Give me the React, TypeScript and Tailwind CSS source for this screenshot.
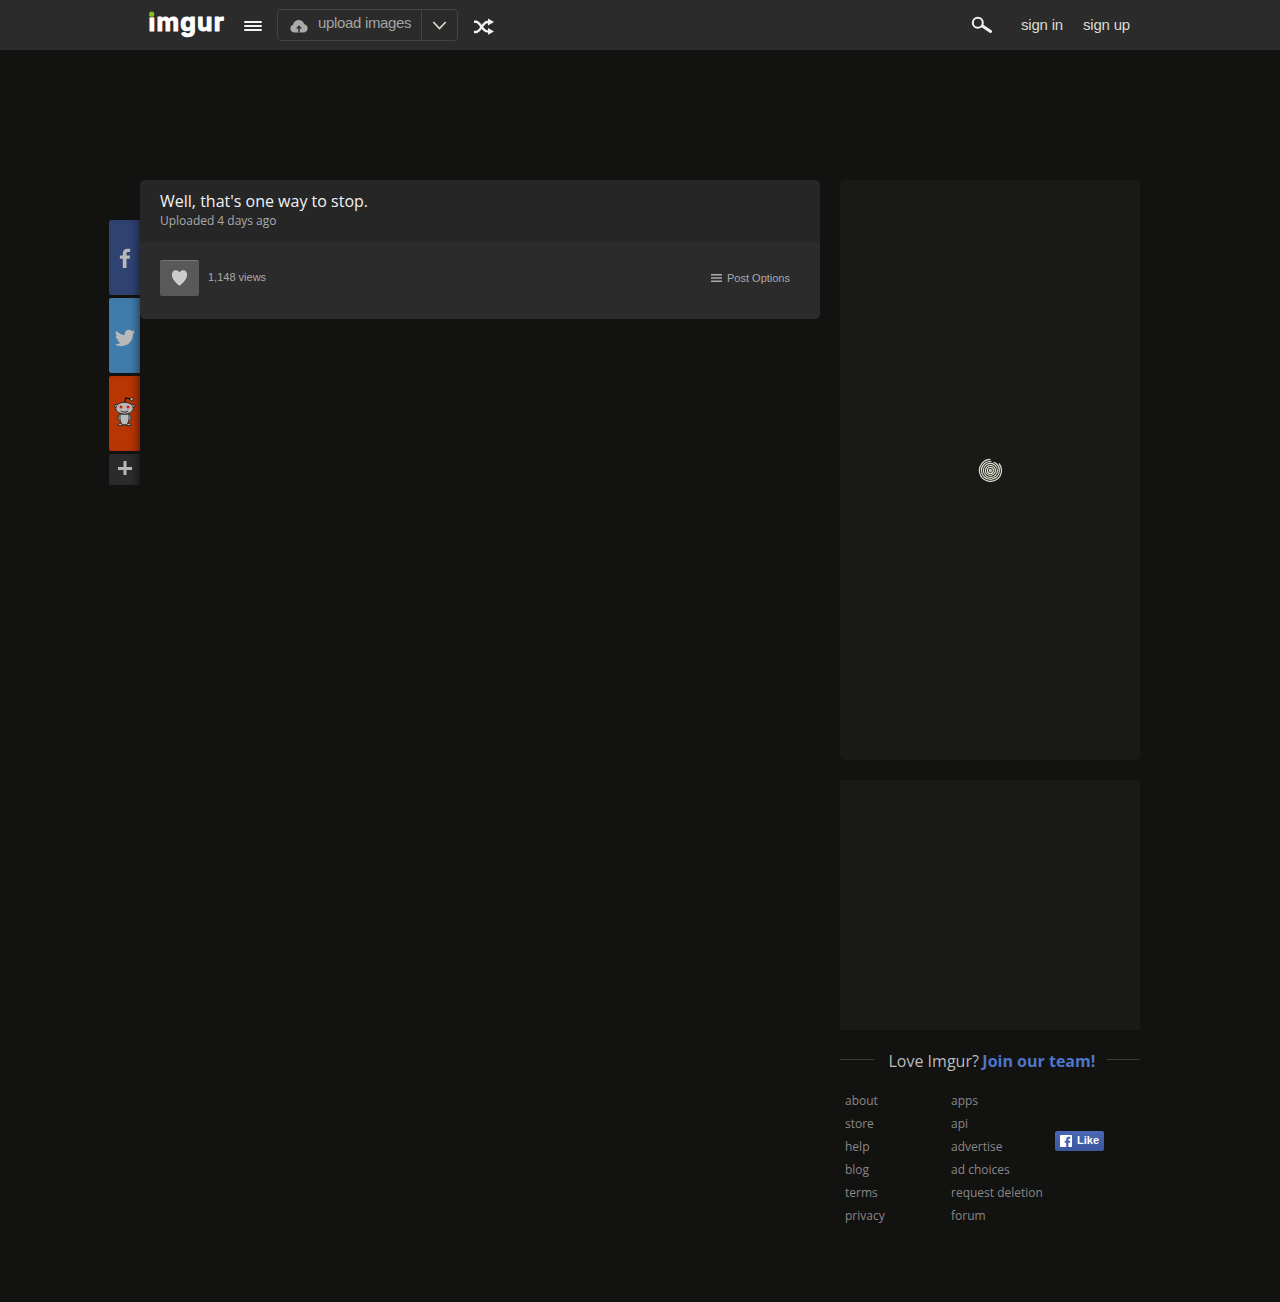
import { ReactNode } from "react";

const footerLinks = [
  ["about", "store", "help", "blog", "terms", "privacy"],
  ["apps", "api", "advertise", "ad choices", "request deletion", "forum"],
];

const rings = [1, 3, 5, 7, 9];

function Logo() {
  return (
    <svg width="80" height="40" viewBox="0 0 80 40" className="block">
      <text
        x="0.6"
        y="26.3"
        textLength="75.2"
        lengthAdjust="spacing"
        fontSize="24.8"
        fontWeight="700"
        fill="#fff"
        stroke="#fff"
        strokeWidth="1"
        strokeLinejoin="round"
        className="font-['Inter',sans-serif]"
      >
        imgur
      </text>
      <rect x="0" y="0" width="8" height="12.3" fill="#2b2b2b" />
      <circle cx="3.7" cy="9.2" r="2.6" fill="#85bf25" />
    </svg>
  );
}

function Header() {
  return (
    <header className="h-[50px] bg-[#2b2b2b] font-['Liberation_Sans',sans-serif] text-[15px]">
      <div className="mx-auto flex h-full w-[1000px] items-start">
        <div className="ml-2 mt-[5px] w-24">
          <Logo />
        </div>
        <div className="mt-[21px] flex w-[18px] flex-col gap-[2px]">
          <span className="h-[2px] rounded-sm bg-[#f2f2f2]" />
          <span className="h-[2px] rounded-sm bg-[#f2f2f2]" />
          <span className="h-[2px] rounded-sm bg-[#f2f2f2]" />
        </div>
        <div className="ml-[15px] mt-[9px] flex h-8 w-[181px] rounded-[4px] border border-[#444]">
          <div className="flex w-[144px] border-r border-[#444]">
            <svg
              width="18"
              height="13"
              viewBox="0 0 18 13"
              className="ml-3 mt-[10px]"
            >
              <path
                d="M3.8 12.4a4 4 0 0 1-.8-7.7C3.8 1.6 6.1.1 8.7.1c2.8 0 5 1.7 5.4 4.2a4.1 4.1 0 0 1 .1 8.1z"
                fill="#aaa"
              />
              <path d="M9 5.2 6 8.5h2.3v3.9h1.4V8.5H12z" fill="#2b2b2b" />
            </svg>
            <span className="ml-[10px] mt-[3px] whitespace-nowrap leading-5 tracking-[-0.33px] text-[#a4a4a4]">
              upload images
            </span>
          </div>
          <svg
            width="15"
            height="10"
            viewBox="0 0 15 10"
            className="ml-[10px] mt-[11px]"
          >
            <path
              d="m1.3 1 6.2 6.6L13.7 1"
              fill="none"
              stroke="#ddddd1"
              strokeWidth="1.6"
            />
          </svg>
        </div>
        <svg
          width="21"
          height="17"
          viewBox="0 0 21 17"
          className="ml-[15px] mt-[18px]"
        >
          <g fill="none" stroke="#f2f2f2" strokeWidth="2.4">
            <path d="M1 3.8h2.2C7 3.8 9.6 13.4 14.3 13.4H16" />
            <path d="M1 14h2.2C7.6 14 9.6 4 14.3 4H16" />
          </g>
          <path d="M15 .6 21 4l-6 3.4zM15 10l6 3.4-6 3.4z" fill="#f2f2f2" />
        </svg>
        <div className="mr-[10px] ml-auto flex tracking-[-0.2px] text-[#ddddd1]">
          <svg
            width="22"
            height="18"
            viewBox="0 0 22 18"
            className="mt-4 mr-7"
          >
            <circle
              cx="6.8"
              cy="6.8"
              r="5"
              fill="none"
              stroke="#f2f2f2"
              strokeWidth="2"
            />
            <path
              d="m11.4 9.9 8.2 5.6"
              stroke="#f2f2f2"
              strokeWidth="3"
              strokeLinecap="round"
            />
          </svg>
          <a className="mt-[15px] mr-5 leading-5">sign in</a>
          <a className="mt-[15px] leading-5">sign up</a>
        </div>
      </div>
    </header>
  );
}

function ShareButton({
  className,
  children,
}: {
  className: string;
  children: ReactNode;
}) {
  return (
    <div
      className={`flex justify-center rounded-l-[2px] shadow-[inset_-8px_0_8px_-6px_rgba(0,0,0,0.5)] ${className}`}
    >
      {children}
    </div>
  );
}

function ShareBar() {
  return (
    <div className="mt-10 flex w-[31px] flex-col gap-[3px]">
      <ShareButton className="h-[75px] bg-[#2f4372]">
        <svg width="12" height="20" viewBox="0 0 12 20" className="mt-7">
          <path
            d="M3.8 20v-9.3H.9V7.5h2.9V5.4C3.8 2.4 5.6.7 8.3.7h2.8v3.2H9.2c-1.3 0-1.7.6-1.7 1.7v1.9H11l-.4 3.2H7.5V20z"
            fill="#b9b9b9"
          />
        </svg>
      </ShareButton>
      <ShareButton className="h-[75px] bg-[#407cab]">
        <svg width="20" height="20" viewBox="0 0 24 24" className="mt-[30px]">
          <path
            d="M23.95 4.57a10 10 0 0 1-2.82.77 4.96 4.96 0 0 0 2.16-2.72c-.95.55-2 .95-3.13 1.18a4.92 4.92 0 0 0-8.38 4.48C7.69 8.09 4.07 6.13 1.64 3.16a4.93 4.93 0 0 0 1.52 6.57 4.9 4.9 0 0 1-2.23-.61v.06a4.92 4.92 0 0 0 3.95 4.83 5 5 0 0 1-2.21.08 4.94 4.94 0 0 0 4.6 3.42A9.87 9.87 0 0 1 0 19.54a14 14 0 0 0 7.55 2.21c9.05 0 14-7.5 14-13.98 0-.21 0-.42-.02-.63a9.94 9.94 0 0 0 2.42-2.57z"
            fill="#b9b9b9"
          />
        </svg>
      </ShareButton>
      <ShareButton className="h-[75px] bg-[#b93504]">
        <svg width="21" height="30" viewBox="1 0 21 30" className="mt-[21px]">
          <path
            d="M11.6 6.5 12.7 1l5 1.1"
            fill="none"
            stroke="#111"
            strokeWidth="1.1"
          />
          <g fill="#b9b9b9" stroke="#222" strokeWidth="0.9">
            <circle cx="18.6" cy="2.1" r="1.6" />
            <circle cx="3.2" cy="9" r="1.7" />
            <circle cx="19.8" cy="9" r="1.7" />
            <ellipse cx="7.2" cy="20.7" rx="2.2" ry="3.4" />
            <ellipse cx="15.8" cy="20.7" rx="2.2" ry="3.4" />
            <path d="M4.9 28.6c.2-2.8 4.8-2.8 4.8 0zM13.3 28.6c0-2.8 4.6-2.8 4.8 0z" />
            <path d="M7.2 17h8.6c.7 4.6 0 9.4-2.6 10.8H9.8C7.2 26.4 6.5 21.6 7.2 17z" />
            <ellipse cx="11.5" cy="11.2" rx="8.7" ry="5.9" />
          </g>
          <circle cx="8" cy="10.1" r="1.5" fill="#c9210c" />
          <circle cx="15" cy="10.1" r="1.5" fill="#c9210c" />
          <path
            d="M7.8 14c2 1.4 5.4 1.4 7.4 0"
            fill="none"
            stroke="#111"
            strokeWidth="0.9"
          />
        </svg>
      </ShareButton>
      <ShareButton className="h-[31px] bg-[#2b2b2b]">
        <svg width="14" height="14" viewBox="0 0 14 14" className="mt-[7px]">
          <path
            d="M7 0v14M0 7.5h14"
            fill="none"
            stroke="#b9b9b9"
            strokeWidth="3"
          />
        </svg>
      </ShareButton>
    </div>
  );
}

function Post() {
  return (
    <div className="h-[139px] w-[680px] overflow-hidden rounded-[5px] bg-[#2b2b2b]">
      <div className="h-[60px] bg-[#262626] px-5 pt-[10px] shadow-[0_0_3px_rgba(0,0,0,0.35)]">
        <h1 className="text-base leading-[22px] text-[#f2f2f2]">
          Well, that's one way to stop.
        </h1>
        <p className="mt-px text-xs leading-4 tracking-[-0.02px] text-[#aaa]">
          Uploaded 4 days ago
        </p>
      </div>
      <div className="flex pt-5 pr-[30px] pl-5 font-['Liberation_Sans',sans-serif] text-[11px] text-[#aaa]">
        <div className="flex h-9 w-[39px] justify-center rounded-[2px] border-t border-[#777] bg-[#595959]">
          <svg width="17" height="17" viewBox="0 0 17 17" className="mt-2">
            <path
              d="M8.5 16.8C5 14 .9 10.2.9 5.8c0-2.8 1.6-4.6 3.8-4.6 1.7 0 3 .8 3.8 2.3.8-1.5 2.1-2.3 3.8-2.3 2.2 0 3.8 1.8 3.8 4.6 0 4.4-4.1 8.2-7.6 11z"
              fill="#ccc"
            />
          </svg>
        </div>
        <span className="mt-[9px] ml-[9px] leading-4">1,148 views</span>
        <svg
          width="11"
          height="8"
          viewBox="0 0 11 8"
          className="mt-[14px] mr-[5px] ml-auto"
        >
          <path
            d="M0 .8h11M0 4h11M0 7.2h11"
            stroke="#aaa"
            strokeWidth="1.5"
          />
        </svg>
        <span className="mt-[10px] leading-4">Post Options</span>
      </div>
    </div>
  );
}

function Spinner() {
  return (
    <svg width="24" height="24" viewBox="0 0 24 24">
      <g fill="none" stroke="#ddddd1" strokeWidth="1.2">
        {rings.map((r) => (
          <circle key={r} cx="12.4" cy="12.4" r={r} />
        ))}
        <path d="M12.4 1.4A11 11 0 1 0 21 5.5" />
      </g>
      <path d="M12.9 0 13.3 3.8l2 .8 1.6-1.5 3 2L22 0z" fill="#191917" />
    </svg>
  );
}

function Sidebar() {
  return (
    <div className="ml-5 w-[300px]">
      <div className="flex h-[580px] items-center justify-center rounded-[5px] bg-[#191917]">
        <Spinner />
      </div>
      <div className="mt-5 h-[250px] bg-[#191917]" />
      <div className="mt-5 flex h-[22px] items-start text-base leading-[22px] whitespace-nowrap">
        <span className="mt-[9px] h-px w-[34px] bg-[#3a3a39]" />
        <span className="ml-[14.5px] text-[#bbb]">Love Imgur?</span>
        <a className="ml-[3.5px] font-bold text-[#4e76c9]">Join our team!</a>
        <span className="mt-[9px] ml-auto h-px w-[33px] bg-[#3a3a39]" />
      </div>
      <div className="mt-[17px] flex pl-[5px] text-xs leading-[23px] text-[#888]">
        {footerLinks.map((column) => (
          <ul key={column[0]} className="w-[106px]">
            {column.map((link) => (
              <li key={link}>{link}</li>
            ))}
          </ul>
        ))}
        <div className="mt-[42px] -ml-[2px] flex h-5 w-[49px] items-center rounded-[2px] bg-linear-to-b from-[#4a68b4] to-[#3b57a0] pl-[5px] font-['Liberation_Sans',sans-serif] text-[11px] font-bold text-white">
          <svg width="12" height="12" viewBox="0 0 12 12">
            <rect width="12" height="12" rx="0.8" fill="#fff" />
            <path
              d="M6.2 12V7.7H4.7V5.7h1.5V4.4c0-1.7 1-2.6 2.5-2.6h1.6v1.9h-.9c-.8 0-1 .4-1 1v1h1.9l-.2 2H8.4V12z"
              fill="#4361aa"
            />
          </svg>
          <span className="-mt-[2px] ml-[5px] leading-5">Like</span>
        </div>
      </div>
    </div>
  );
}

function App() {
  return (
    <div className="h-[1302px] bg-[#121211] font-['Open_Sans',sans-serif]">
      <Header />
      <div className="mx-auto mt-[130px] flex w-[1062px] items-start">
        <ShareBar />
        <Post />
        <Sidebar />
      </div>
    </div>
  );
}

export default App;
